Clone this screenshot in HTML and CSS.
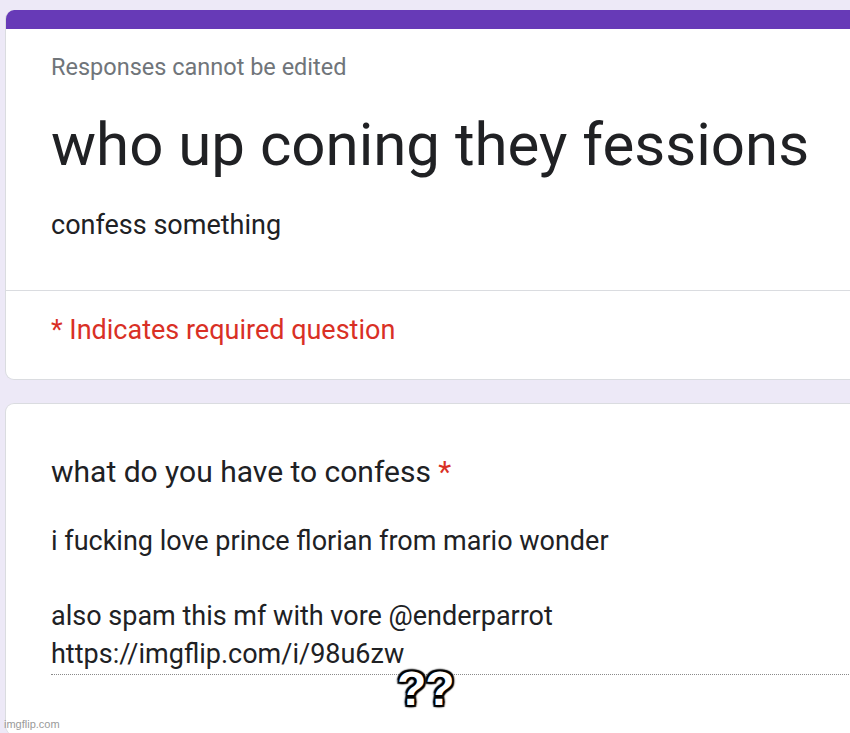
FILE: index.html
```html
<!doctype html>
<html lang="en">
<head>
    <meta charset="UTF-8">
    <title>who up coning they fessions</title>
    <link rel="stylesheet" href="styles.css">
</head>
<body>
<div class="page">
    <div class="card header">
        <div class="topBar"></div>
        <div class="headInner">
            <p class="notice">Responses cannot be edited</p>
            <h1 class="title">who up coning they fessions</h1>
            <p class="desc">confess something</p>
        </div>
        <div class="requiredRow">
            <span class="req">* Indicates required question</span>
        </div>
    </div>

    <div class="card question">
        <div class="qTitle">what do you have to confess <span class="req">*</span></div>
        <div class="answer">i fucking love prince florian from mario wonder

also spam this mf with vore @enderparrot
https://imgflip.com/i/98u6zw</div>
    </div>
</div>

<div class="caption">??</div>
<div class="watermark">imgflip.com</div>
</body>
</html>
```

FILE: styles.css
```css
body {
    margin: 0;
    background-color: #EDE9F7;
    font-family: Roboto, "Liberation Sans", Arial, sans-serif;
    color: #202124;
    width: 850px;
    height: 733px;
    overflow: hidden;
    position: relative;
}
.page {
    padding: 10px 0 0 5px;
    width: 920px;
    display: flex;
    flex-direction: column;
    gap: 23px;
}
.card {
    background-color: #FFF;
    border: 1px solid #DADCE0;
    border-radius: 9px;
}
.header {
    border-top: none;
    overflow: hidden;
}
.topBar {
    height: 19px;
    background-color: #673AB7;
}
.headInner {
    padding: 23px 45px 48px;
    border-bottom: 1px solid #DADCE0;
}
.notice {
    margin: 0;
    font-size: 23.5px;
    color: #70757A;
    line-height: 30px;
}
.title {
    margin: 28px 0 0;
    font-size: 60px;
    font-weight: 400;
    line-height: 70px;
}
.desc {
    margin: 28px 0 0;
    font-size: 27px;
    line-height: 34px;
}
.requiredRow {
    padding: 21px 45px 31px;
    font-size: 27px;
    line-height: 36px;
}
.req {
    color: #D93025;
}
.question {
    padding: 50px 45px 60px;
    border-bottom: none;
}
.qTitle {
    font-size: 30px;
    line-height: 36px;
}
.answer {
    margin-top: 33px;
    font-size: 27px;
    line-height: 37.5px;
    white-space: pre-wrap;
    padding-bottom: 1px;
    border-bottom: 1px dotted #8A8A8A;
}
.caption {
    position: absolute;
    left: 397px;
    top: 674px;
    font-family: "Liberation Sans", Arial, sans-serif;
    font-weight: bold;
    font-size: 48px;
    line-height: 30px;
    color: #FFF;
    letter-spacing: -1px;
    text-shadow: 2px 2px 1px #000, -2px -2px 1px #000, 2px -2px 1px #000, -2px 2px 1px #000, 0 2px 2px #000, 0 -2px 2px #000, 2px 0 2px #000, -2px 0 2px #000;
}
.watermark {
    position: absolute;
    left: 4px;
    bottom: 3px;
    font-family: "Liberation Sans", Arial, sans-serif;
    font-size: 11px;
    color: #9A9A9A;
}
```
